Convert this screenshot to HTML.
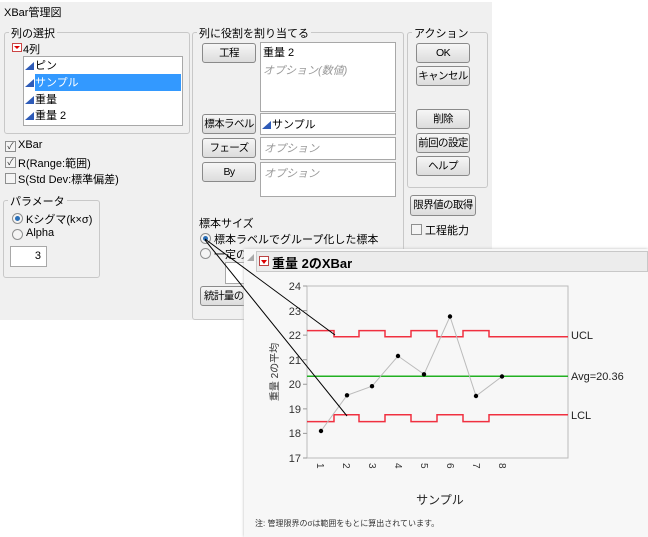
<!DOCTYPE html>
<html><head><meta charset="utf-8"><style>
*{box-sizing:border-box;margin:0;padding:0}
body{width:648px;height:537px;background:#fff;position:relative;overflow:hidden;font-family:"Liberation Sans","Noto Sans CJK JP",sans-serif;font-size:11px;color:#000}
.a{position:absolute;white-space:nowrap}
.grp{position:absolute;border:1px solid #c8c8c8;border-radius:3px}
.gl{position:absolute;background:#f0f0f0;padding:0 2px;top:-8px;left:4px;font-size:11px;white-space:nowrap}
.btn{position:absolute;border:1px solid #8a8a8a;border-radius:3px;background:linear-gradient(#f6f6f6,#dcdcdc);text-align:center;font-size:10.5px;line-height:18px;white-space:nowrap;overflow:hidden;letter-spacing:-0.6px}
.box{position:absolute;background:#fff;border:1px solid #a8a8a8}
.it{color:#999;font-style:italic}
.cb{position:absolute;width:11px;height:11px;border:1px solid #8e8f8f;background:#f4f4f4;font-size:9px;line-height:9px;text-align:center;color:#333;overflow:hidden}
.rd{position:absolute;width:11px;height:11px;border:1px solid #8e8f8f;border-radius:50%;background:#f4f4f4}
.rd.on::after{content:"";position:absolute;left:2px;top:2px;width:5px;height:5px;border-radius:50%;background:#2a6fb8}
.tri{display:inline-block;width:0;height:0;border-left:9px solid transparent;border-bottom:8px solid #2e5bb8;margin-right:1px;vertical-align:-1px}
</style></head><body>
<div class="a" style="left:0;top:2px;width:492px;height:318px;background:#f0f0f0"></div>
<div class="a" style="left:4px;top:4px;font-size:11px">XBar管理図</div>

<div class="grp" style="left:4px;top:32px;width:186px;height:102px"><div class="gl">列の選択</div></div>
<div class="a" style="left:12px;top:43px;width:10px;height:9px;border:1px solid #c44;background:#fff"><div style="position:absolute;left:1px;top:2px;border-left:3px solid transparent;border-right:3px solid transparent;border-top:3px solid #d00"></div></div>
<div class="a" style="left:23px;top:41px">4列</div>
<div class="box" style="left:23px;top:56px;width:160px;height:70px"></div>
<div class="a" style="left:35px;top:74px;width:146px;height:17px;background:#3399ff"></div>
<div class="a" style="left:25px;top:59px;line-height:14px"><span class="tri"></span>ピン</div>
<div class="a" style="left:25px;top:76px;line-height:14px"><span class="tri"></span><span style="color:#fff">サンプル</span></div>
<div class="a" style="left:25px;top:93px;line-height:14px"><span class="tri"></span>重量</div>
<div class="a" style="left:25px;top:109px;line-height:14px"><span class="tri"></span>重量 2</div>

<div class="cb" style="left:5px;top:141px">✓</div><div class="a" style="left:18px;top:139px">XBar</div>
<div class="cb" style="left:5px;top:157px">✓</div><div class="a" style="left:18px;top:155px">R(Range:範囲)</div>
<div class="cb" style="left:5px;top:173px"></div><div class="a" style="left:18px;top:171px">S(Std Dev:標準偏差)</div>

<div class="grp" style="left:3px;top:200px;width:97px;height:78px"><div class="gl">パラメータ</div></div>
<div class="rd on" style="left:12px;top:213px"></div><div class="a" style="left:26px;top:211px">Kシグマ(k×σ)</div>
<div class="rd" style="left:12px;top:229px"></div><div class="a" style="left:26px;top:227px">Alpha</div>
<div class="box" style="left:10px;top:246px;width:37px;height:21px;text-align:right;padding-right:5px;line-height:18px">3</div>

<div class="grp" style="left:192px;top:32px;width:212px;height:288px"><div class="gl">列に役割を割り当てる</div></div>
<div class="btn" style="left:202px;top:43px;width:54px;height:20px">工程</div>
<div class="box" style="left:260px;top:42px;width:136px;height:70px"></div>
<div class="a" style="left:263px;top:44px">重量 2</div>
<div class="a it" style="left:263px;top:62px">オプション(数値)</div>
<div class="btn" style="left:202px;top:114px;width:54px;height:20px">標本ラベル</div>
<div class="box" style="left:260px;top:113px;width:136px;height:22px"></div>
<div class="a" style="left:262px;top:116px"><span class="tri"></span>サンプル</div>
<div class="btn" style="left:202px;top:138px;width:54px;height:20px">フェーズ</div>
<div class="box" style="left:260px;top:137px;width:136px;height:23px"></div>
<div class="a it" style="left:264px;top:140px">オプション</div>
<div class="btn" style="left:202px;top:162px;width:54px;height:20px">By</div>
<div class="box" style="left:260px;top:162px;width:136px;height:35px"></div>
<div class="a it" style="left:264px;top:165px">オプション</div>
<div class="a" style="left:199px;top:215px">標本サイズ</div>
<div class="rd on" style="left:200px;top:233px"></div><div class="a" style="left:214px;top:231px">標本ラベルでグループ化した標本</div>
<div class="rd" style="left:200px;top:248px"></div><div class="a" style="left:214px;top:246px">一定の</div>
<div class="box" style="left:225px;top:262px;width:22px;height:22px"></div>
<div class="btn" style="left:200px;top:286px;width:50px;height:20px;text-align:left;padding-left:3px">統計量の</div>

<div class="grp" style="left:407px;top:32px;width:81px;height:156px"><div class="gl">アクション</div></div>
<div class="btn" style="left:416px;top:43px;width:54px;height:20px">OK</div>
<div class="btn" style="left:416px;top:66px;width:54px;height:20px">キャンセル</div>
<div class="btn" style="left:416px;top:109px;width:54px;height:20px">削除</div>
<div class="btn" style="left:416px;top:133px;width:54px;height:20px">前回の設定</div>
<div class="btn" style="left:416px;top:156px;width:54px;height:20px">ヘルプ</div>
<div class="btn" style="left:410px;top:195px;width:66px;height:21px">限界値の取得</div>
<div class="cb" style="left:411px;top:224px"></div><div class="a" style="left:425px;top:222px">工程能力</div>

<div class="a" style="left:244px;top:249px;width:404px;height:288px;background:#f7f7f7;box-shadow:0 0 3px #bbb"></div>
<div class="a" style="left:247px;top:254px;border-left:7px solid transparent;border-bottom:7px solid #aaa"></div>
<div class="a" style="left:256px;top:251px;width:392px;height:21px;background:#ececec;border:1px solid #c8c8c8"></div>
<div class="a" style="left:259px;top:256px;width:10px;height:10px;border:1px solid #b44;background:#fff"><div style="position:absolute;left:1px;top:3px;border-left:3px solid transparent;border-right:3px solid transparent;border-top:4px solid #d00"></div></div>
<div class="a" style="left:272px;top:253px;font-size:13px;font-weight:bold">重量 2のXBar</div>

<svg class="a" style="left:0;top:0" width="648" height="537" xmlns="http://www.w3.org/2000/svg" font-family="Liberation Sans, Noto Sans CJK JP, sans-serif">
<rect x="307" y="286" width="261" height="172" fill="#f7f7f7" stroke="#bbb"/>
<g font-size="11" fill="#333" text-anchor="end">
<text x="301" y="290">24</text><text x="301" y="315">23</text><text x="301" y="339">22</text><text x="301" y="364">21</text><text x="301" y="388">20</text><text x="301" y="413">19</text><text x="301" y="437">18</text><text x="301" y="462">17</text>
</g>
<g stroke="#999"><path d="M303 286h4M303 310.6h4M303 335.1h4M303 359.7h4M303 384.3h4M303 408.9h4M303 433.4h4M303 458h4"/></g>
<g font-size="10" fill="#333">
<text transform="translate(317,463) rotate(90)">1</text><text transform="translate(343,463) rotate(90)">2</text><text transform="translate(369,463) rotate(90)">3</text><text transform="translate(395,463) rotate(90)">4</text><text transform="translate(421,463) rotate(90)">5</text><text transform="translate(447,463) rotate(90)">6</text><text transform="translate(473,463) rotate(90)">7</text><text transform="translate(499,463) rotate(90)">8</text>
</g>
<text transform="translate(278,372) rotate(-90)" font-size="10" fill="#333" text-anchor="middle">重量 2の平均</text>
<text x="440" y="504" font-size="12" fill="#222" text-anchor="middle">サンプル</text>
<text x="255" y="526" font-size="8" fill="#333">注: 管理限界のσは範囲をもとに算出されています。</text>
<line x1="307" y1="376.3" x2="568" y2="376.3" stroke="#22b022" stroke-width="1.5"/>
<path d="M307 330.6H334V336.8H359V330.6H385V336.8H411V330.6H437V336.8H463V330.6H489V336.8H568" fill="none" stroke="#f03040" stroke-width="1.5"/>
<path d="M307 421.6H334V414.7H359V421.6H385V414.7H411V421.6H437V414.7H463V421.6H489V414.7H568" fill="none" stroke="#f03040" stroke-width="1.5"/>
<polyline points="321,431 347,395.3 372,386.2 398,356 424,374.3 450,316.5 476,396 502,376.5" fill="none" stroke="#bbb"/>
<g fill="#000"><circle cx="321" cy="431" r="2.2"/><circle cx="347" cy="395.3" r="2.2"/><circle cx="372" cy="386.2" r="2.2"/><circle cx="398" cy="356" r="2.2"/><circle cx="424" cy="374.3" r="2.2"/><circle cx="450" cy="316.5" r="2.2"/><circle cx="476" cy="396" r="2.2"/><circle cx="502" cy="376.5" r="2.2"/></g>
<g font-size="11" fill="#222"><text x="571" y="339">UCL</text><text x="571" y="380">Avg=20.36</text><text x="571" y="419">LCL</text></g>
<line x1="205" y1="239" x2="335" y2="335" stroke="#000"/>
<line x1="205" y1="240" x2="347" y2="416" stroke="#000"/>
</svg>
</body></html>
